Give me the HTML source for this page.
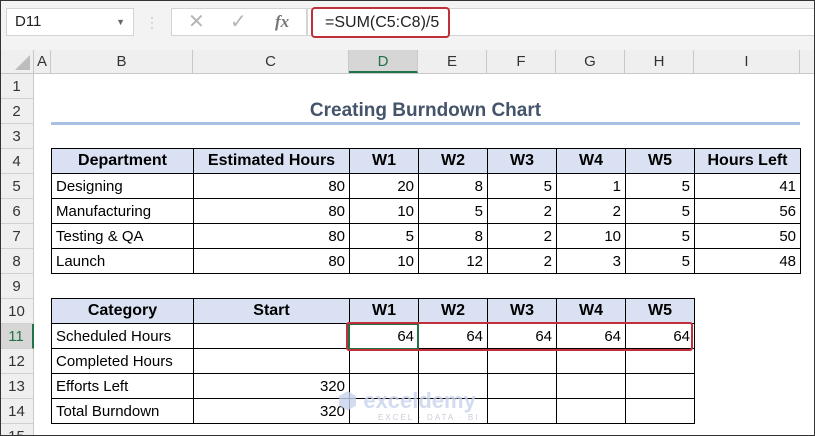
<!DOCTYPE html><html><head><style>
*{margin:0;padding:0;box-sizing:border-box}
html,body{width:815px;height:436px;overflow:hidden}
body{background:#fff;font-family:"Liberation Sans",sans-serif;position:relative}
.a{position:absolute}
table{position:absolute;border-collapse:collapse;font-size:15px;color:#000}
td{border:1px solid #000;height:25px;padding:0 4px;white-space:nowrap;text-align:right}
td.l{text-align:left}
tr.h td{background:#d9e1f2;font-weight:bold;text-align:center;font-size:16px}
.ch{position:absolute;top:50px;height:23px;border-right:1px solid #c8c8c8;text-align:center;font-size:15px;line-height:23px;color:#333;background:#efefef}
.rh{position:absolute;left:0;width:34px;height:25px;border-bottom:1px solid #d0d0d0;text-align:center;font-size:15px;line-height:25px;color:#333;background:#efefef;border-right:1px solid #c8c8c8}
</style></head><body>
<div class="a" style="left:0;top:0;width:815px;height:50px;background:#f3f3f3"></div>
<div class="a" style="left:6px;top:8px;width:128px;height:28px;background:#fff;border:1px solid #d4d4d4;font-size:15px;line-height:26px;padding-left:8px;color:#222">D11<span style="position:absolute;right:8px;top:0;font-size:9px;color:#666">▼</span></div>
<div class="a" style="left:150px;top:15px;color:#aaa;font-size:12px;line-height:5px">·<br>·<br>·</div>
<div class="a" style="left:171px;top:8px;width:136px;height:28px;background:#fff;border:1px solid #d4d4d4;color:#b5b5b5;font-size:20px;line-height:26px"><span style="position:absolute;left:16px">✕</span><span style="position:absolute;left:58px">✓</span><span style="position:absolute;left:103px;font-family:'Liberation Serif',serif;font-style:italic;font-weight:bold;font-size:17px;color:#777">fx</span></div>
<div class="a" style="left:307px;top:8px;width:508px;height:28px;background:#fff;border:1px solid #d4d4d4"></div>
<div class="a" style="left:311px;top:7px;width:139px;height:31px;border:2px solid #c0303a;border-radius:4px;background:#fff;font-size:16px;line-height:27px;padding-left:12px;color:#222">=SUM(C5:C8)/5</div>
<div class="a" style="left:0;top:50px;width:34px;height:23px;background:#efefef;border-right:1px solid #c8c8c8"><div style="position:absolute;right:3px;bottom:3px;width:0;height:0;border-left:15px solid transparent;border-bottom:15px solid #bdbdbd"></div></div>
<div class="ch" style="left:34px;width:17px">A</div>
<div class="ch" style="left:51px;width:142px">B</div>
<div class="ch" style="left:193px;width:156px">C</div>
<div class="ch" style="left:349px;width:69px;background:#d6d6d6;border-bottom:2px solid #217346;color:#217346">D</div>
<div class="ch" style="left:418px;width:69px">E</div>
<div class="ch" style="left:487px;width:69px">F</div>
<div class="ch" style="left:556px;width:69px">G</div>
<div class="ch" style="left:625px;width:69px">H</div>
<div class="ch" style="left:694px;width:106px">I</div>
<div class="ch" style="left:800px;width:15px;border:none"></div>
<div class="a" style="left:0;top:73px;width:815px;height:1px;background:#c8c8c8"></div>
<div class="rh" style="top:74px">1</div><div class="rh" style="top:99px">2</div><div class="rh" style="top:124px">3</div><div class="rh" style="top:149px">4</div><div class="rh" style="top:174px">5</div><div class="rh" style="top:199px">6</div><div class="rh" style="top:224px">7</div><div class="rh" style="top:249px">8</div><div class="rh" style="top:274px">9</div><div class="rh" style="top:299px">10</div><div class="rh" style="top:324px;background:#d6d6d6;border-right:2px solid #217346;color:#217346">11</div><div class="rh" style="top:349px">12</div><div class="rh" style="top:374px">13</div><div class="rh" style="top:399px">14</div><div class="rh" style="top:424px">15</div>
<div class="a" style="left:51px;top:98px;width:749px;height:25px;text-align:center;font-weight:bold;font-size:19px;line-height:25px;color:#44546a">Creating Burndown Chart</div>
<div class="a" style="left:51px;top:122px;width:749px;height:3px;background:#a9bfe4"></div>
<table style="left:51px;top:148px">
<colgroup><col style="width:142px"><col style="width:156px"><col style="width:69px"><col style="width:69px"><col style="width:69px"><col style="width:69px"><col style="width:69px"><col style="width:106px"></colgroup>
<tr class="h"><td>Department</td><td>Estimated Hours</td><td>W1</td><td>W2</td><td>W3</td><td>W4</td><td>W5</td><td>Hours Left</td></tr>
<tr><td class="l">Designing</td><td>80</td><td>20</td><td>8</td><td>5</td><td>1</td><td>5</td><td>41</td></tr>
<tr><td class="l">Manufacturing</td><td>80</td><td>10</td><td>5</td><td>2</td><td>2</td><td>5</td><td>56</td></tr>
<tr><td class="l">Testing &amp; QA</td><td>80</td><td>5</td><td>8</td><td>2</td><td>10</td><td>5</td><td>50</td></tr>
<tr><td class="l">Launch</td><td>80</td><td>10</td><td>12</td><td>2</td><td>3</td><td>5</td><td>48</td></tr>
</table>
<table style="left:51px;top:298px">
<colgroup><col style="width:142px"><col style="width:156px"><col style="width:69px"><col style="width:69px"><col style="width:69px"><col style="width:69px"><col style="width:69px"></colgroup>
<tr class="h"><td>Category</td><td>Start</td><td>W1</td><td>W2</td><td>W3</td><td>W4</td><td>W5</td></tr>
<tr><td class="l">Scheduled Hours</td><td></td><td>64</td><td>64</td><td>64</td><td>64</td><td>64</td></tr>
<tr><td class="l">Completed Hours</td><td></td><td></td><td></td><td></td><td></td><td></td></tr>
<tr><td class="l">Efforts Left</td><td>320</td><td></td><td></td><td></td><td></td><td></td></tr>
<tr><td class="l">Total Burndown</td><td>320</td><td></td><td></td><td></td><td></td><td></td></tr>
</table>
<div class="a" style="left:348px;top:323px;width:71px;height:27px;border:2px solid #217346"></div>
<div class="a" style="left:346px;top:322px;width:347px;height:29px;border:2px solid #c0303a;border-radius:3px"></div>
<div class="a" style="left:338px;top:388px;color:#c9d3ee;font-weight:bold;font-size:22px;opacity:.8">⬢ exceldemy</div>
<div class="a" style="left:378px;top:413px;color:#ccd;font-size:8px;letter-spacing:2px">EXCEL · DATA · BI</div>
<div class="a" style="left:0;top:0;width:815px;height:436px;border:1px solid #333"></div>
</body></html>
